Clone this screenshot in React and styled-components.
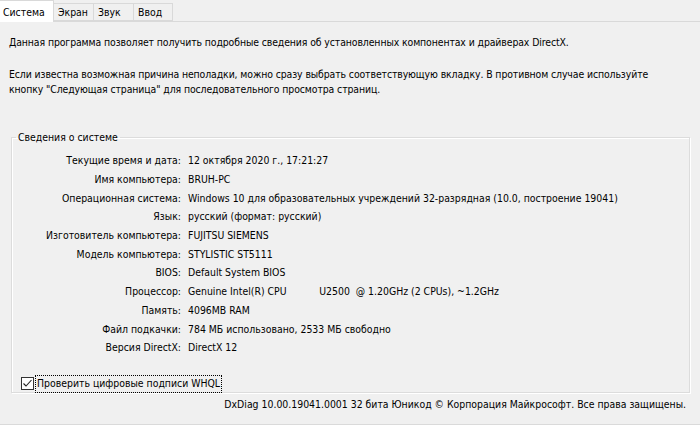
import React from "react";
import styled, { createGlobalStyle } from "styled-components";

const Global = createGlobalStyle`
  html, body { margin: 0; padding: 0; background: #f0f0f0; }
  body { font-family: "DejaVu Sans Condensed", "Liberation Sans", Arial, sans-serif; font-size: 10.4px; color: #000; }
  #root { width: 700px; height: 428px; overflow: hidden; }
`;

const Window = styled.div`
  width: 700px;
  height: 428px;
  display: flex;
  flex-direction: column;
  background: #f0f0f0;
`;

const TabBar = styled.div`
  display: flex;
  align-items: flex-end;
  height: 21px;
  border-bottom: 1px solid #d9d9d9;
  padding-left: 0;
`;

const Tab = styled.div`
  box-sizing: border-box;
  height: ${(p) => (p.$active ? "22px" : "18px")};
  margin-bottom: ${(p) => (p.$active ? "-1px" : "0")};
  padding: ${(p) => (p.$active ? "0 7px 0 3px" : "0 8px 0 4px")};
  width: ${(p) => p.$w}px;
  display: flex;
  align-items: center;
  background: ${(p) => (p.$active ? "#ffffff" : "#f0f0f0")};
  border: 1px solid #d9d9d9;
  border-bottom: ${(p) => (p.$active ? "none" : "1px solid #d9d9d9")};
  border-left: ${(p) => (p.$first ? "none" : "1px solid #d9d9d9")};
  margin-left: ${(p) => (p.$first ? "0" : "-1px")};
  padding-top: ${(p) => (p.$active ? "1px" : "0")};
  white-space: nowrap;
`;

const Body = styled.div`
  display: flex;
  flex-direction: column;
  padding: 13px 0 0 9px;
`;

const Para = styled.p`
  margin: 0 0 ${(p) => p.$mb || 0}px 0;
  line-height: 15px;
  letter-spacing: -0.1px;
`;

const Group = styled.fieldset`
  margin: 0 10px 0 11px;
  padding: 7px 0 0 0;
  border: 1px solid #dcdcdc;
  box-shadow: inset 1px 1px 0 #ffffff, 1px 1px 0 #ffffff;
  height: 262px;
  box-sizing: border-box;
  min-width: 0;
`;

const Legend = styled.legend`
  margin-left: 4px;
  padding: 0 2px;
  line-height: 13px;
`;

const InfoGrid = styled.div`
  display: grid;
  grid-template-columns: 169px 1fr;
  column-gap: 7px;
  grid-auto-rows: 18.7px;
  align-items: center;
`;

const Label = styled.div`
  text-align: right;
  white-space: nowrap;
`;

const Value = styled.div`
  white-space: pre;
`;

const CheckRow = styled.label`
  display: flex;
  align-items: center;
  margin: 18px 0 0 9px;
  gap: 1px;
`;

const Box = styled.span`
  width: 13px;
  height: 13px;
  box-sizing: border-box;
  border: 1px solid #333333;
  background: #ffffff;
  display: flex;
  align-items: center;
  justify-content: center;
`;

const CheckText = styled.span`
  border: 1px dotted #000;
  padding: 1px 1px 2px 1px;
  line-height: 13px;
`;

const Footer = styled.div`
  text-align: right;
  padding: 4px 14px 0 0;
  line-height: 15px;
  flex: 1;
`;

const BottomEdge = styled.div`
  height: 3px;
  border-top: 1px solid #dadada;
  background: #ffffff;
`;

const rows = [
  ["Текущие время и дата:", "12 октября 2020 г., 17:21:27"],
  ["Имя компьютера:", "BRUH-PC"],
  ["Операционная система:", "Windows 10 для образовательных учреждений 32-разрядная (10.0, построение 19041)"],
  ["Язык:", "русский (формат: русский)"],
  ["Изготовитель компьютера:", "FUJITSU SIEMENS"],
  ["Модель компьютера:", "STYLISTIC ST5111"],
  ["BIOS:", "Default System BIOS"],
  ["Процессор:", "Genuine Intel(R) CPU           U2500  @ 1.20GHz (2 CPUs), ~1.2GHz"],
  ["Память:", "4096MB RAM"],
  ["Файл подкачки:", "784 МБ использовано, 2533 МБ свободно"],
  ["Версия DirectX:", "DirectX 12"],
];

export default function App() {
  return (
    <>
      <Global />
      <Window>
        <TabBar>
          <Tab $active $first $w={54}>Система</Tab>
          <Tab $w={41}>Экран</Tab>
          <Tab $w={41}>Звук</Tab>
          <Tab $w={40}>Ввод</Tab>
        </TabBar>
        <Body>
          <Para $mb={17}>
            Данная программа позволяет получить подробные сведения об установленных компонентах и драйверах DirectX.
          </Para>
          <Para $mb={34}>
            Если известна возможная причина неполадки, можно сразу выбрать соответствующую вкладку. В противном случае используйте
            <br />
            кнопку "Следующая страница" для последовательного просмотра страниц.
          </Para>
        </Body>
        <Group>
          <Legend>Сведения о системе</Legend>
          <InfoGrid>
            {rows.map(([l, v]) => (
              <React.Fragment key={l}>
                <Label>{l}</Label>
                <Value>{v}</Value>
              </React.Fragment>
            ))}
          </InfoGrid>
          <CheckRow>
            <Box>
              <svg width="11" height="11" viewBox="0 0 11 11">
                <path d="M1.5 5.5 L4 8 L9.5 2" fill="none" stroke="#222" strokeWidth="1.1" />
              </svg>
            </Box>
            <CheckText>Проверить цифровые подписи WHQL</CheckText>
          </CheckRow>
        </Group>
        <Footer>DxDiag 10.00.19041.0001 32 бита Юникод © Корпорация Майкрософт. Все права защищены.</Footer>
        <BottomEdge />
      </Window>
    </>
  );
}
